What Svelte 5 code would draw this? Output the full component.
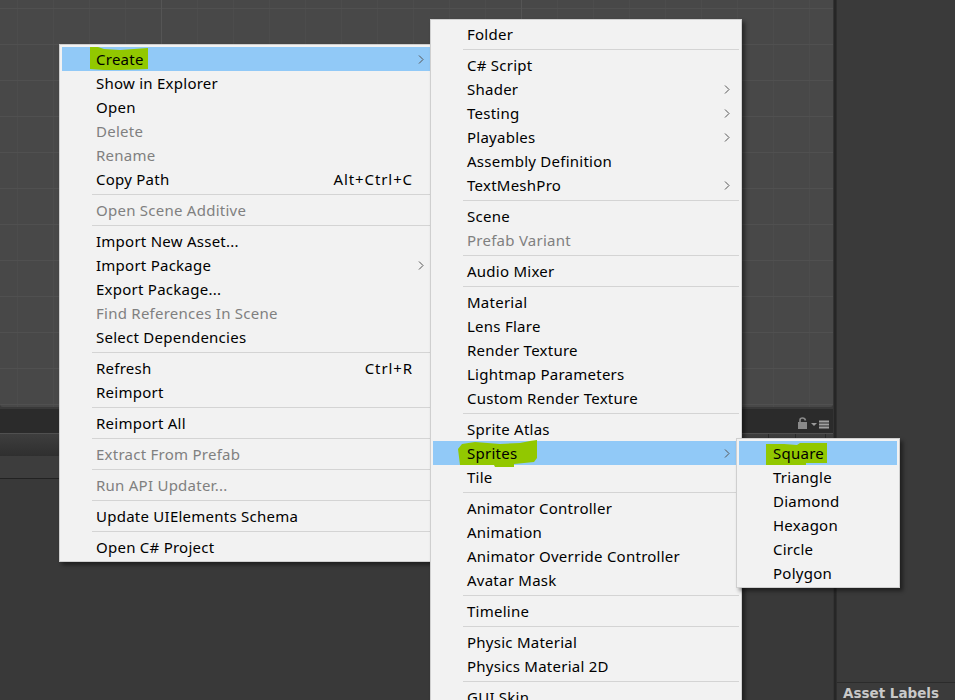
<script lang="ts">
  type Item = { label?: string; sep?: boolean; off?: boolean; sub?: boolean; key?: string; on?: boolean; blob?: string };

  // Hand-drawn marker strokes, relative to the blob svg origin
  const createBlob = "M0 1L8 1L14 3L30 4L44 3L58 2L58 23L30 24L14 24L0 23Z";
  const spritesBlob = "M-3 9L1 4L14 2L39 4L59 3L69 1L76 0L76 18L73 22L53 24L53 27L34 27L33 25L-1 25Z";
  const squareBlob = "M-1 4L17 4L30 5L33 3L60 3L60 23L39 23L39 25L-1 25Z";

  const mainMenu: Item[] = [
    { label: "Create", sub: true, on: true, blob: createBlob },
    { label: "Show in Explorer" },
    { label: "Open" },
    { label: "Delete", off: true },
    { label: "Rename", off: true },
    { label: "Copy Path", key: "Alt+Ctrl+C" },
    { sep: true },
    { label: "Open Scene Additive", off: true },
    { sep: true },
    { label: "Import New Asset..." },
    { label: "Import Package", sub: true },
    { label: "Export Package..." },
    { label: "Find References In Scene", off: true },
    { label: "Select Dependencies" },
    { sep: true },
    { label: "Refresh", key: "Ctrl+R" },
    { label: "Reimport" },
    { sep: true },
    { label: "Reimport All" },
    { sep: true },
    { label: "Extract From Prefab", off: true },
    { sep: true },
    { label: "Run API Updater...", off: true },
    { sep: true },
    { label: "Update UIElements Schema" },
    { sep: true },
    { label: "Open C# Project" },
  ];

  const createMenu: Item[] = [
    { label: "Folder" },
    { sep: true },
    { label: "C# Script" },
    { label: "Shader", sub: true },
    { label: "Testing", sub: true },
    { label: "Playables", sub: true },
    { label: "Assembly Definition" },
    { label: "TextMeshPro", sub: true },
    { sep: true },
    { label: "Scene" },
    { label: "Prefab Variant", off: true },
    { sep: true },
    { label: "Audio Mixer" },
    { sep: true },
    { label: "Material" },
    { label: "Lens Flare" },
    { label: "Render Texture" },
    { label: "Lightmap Parameters" },
    { label: "Custom Render Texture" },
    { sep: true },
    { label: "Sprite Atlas" },
    { label: "Sprites", sub: true, on: true, blob: spritesBlob },
    { label: "Tile" },
    { sep: true },
    { label: "Animator Controller" },
    { label: "Animation" },
    { label: "Animator Override Controller" },
    { label: "Avatar Mask" },
    { sep: true },
    { label: "Timeline" },
    { sep: true },
    { label: "Physic Material" },
    { label: "Physics Material 2D" },
    { sep: true },
    { label: "GUI Skin" },
  ];

  const spritesMenu: Item[] = [
    { label: "Square", on: true, blob: squareBlob },
    { label: "Triangle" },
    { label: "Diamond" },
    { label: "Hexagon" },
    { label: "Circle" },
    { label: "Polygon" },
  ];
</script>

{#snippet menu(items: Item[], cls: string)}
  <div class="menu {cls}">
    {#each items as item}
      {#if item.sep}
        <div class="sep"></div>
      {:else}
        <div class="item" class:on={item.on} class:off={item.off}>
          {#if item.blob}
            <svg class="blob" width="80" height="28" viewBox="0 0 80 28"><path d={item.blob} fill="#92c800"/></svg>
          {/if}
          <span class="label">{item.label}</span>
          {#if item.key}<span class="key">{item.key}</span>{/if}
          {#if item.sub}
            <svg class="chev" width="6" height="9" viewBox="0 0 6 9"><path d="M1 .5L5 4.5L1 8.5" fill="none" stroke="#555" stroke-width="1"/></svg>
          {/if}
        </div>
      {/if}
    {/each}
  </div>
{/snippet}

<div class="editor">
  <div class="main-col">
    <div class="scene"></div>
    <div class="toolbar">
      <svg class="tools" width="34" height="14" viewBox="0 0 34 14">
        <rect x="1" y="5" width="9" height="7" fill="#8a8a8a"/>
        <path d="M3 5V3Q3 1 5.5 1Q8 1 8.5 3.5" fill="none" stroke="#8a8a8a" stroke-width="1.6"/>
        <path d="M14 6H20L17 9Z" fill="#9a9a9a"/>
        <path d="M22 4.5H32M22 7.5H32M22 10.5H32" stroke="#a0a0a0" stroke-width="2"/>
      </svg>
    </div>
    <div class="tabs">
      <div class="tab" style="width: 28px"></div>
      <div class="tab" style="width: 26px"></div>
      <div class="tab" style="width: 29px"></div>
      <div class="tab" style="width: 7px"></div>
    </div>
    <div class="filter"></div>
    <div class="list"></div>
  </div>
  <div class="splitter"></div>
  <div class="side">
    <div class="side-body"></div>
    <div class="labels">Asset Labels</div>
  </div>

  {@render menu(mainMenu, "m-main")}
  {@render menu(createMenu, "m-create")}
  {@render menu(spritesMenu, "m-sprites")}
</div>

<style>
  :global(body) {
    margin: 0;
    background: #393939;
  }

  .editor {
    position: relative;
    width: 955px;
    height: 700px;
    overflow: hidden;
    display: flex;
    font-family: "Noto Sans", "Open Sans", sans-serif;
  }

  /* ── Editor panels behind the menus ── */

  .main-col {
    width: 833px;
    display: flex;
    flex-direction: column;
  }

  .scene {
    height: 407px;
    background-color: #484848;
    background-image:
      linear-gradient(90deg, #555 1px, transparent 1px),
      linear-gradient(#505050 1px, transparent 1px),
      linear-gradient(90deg, #4c4c4c 1px, transparent 1px);
    background-size: 360px 360px, 36px 36px, 36px 36px;
    background-position: 161px 0, 0 8px, 17px 0;
    border-radius: 0 0 3px 3px;
  }

  .toolbar {
    height: 24px;
    margin-top: 2px;
    background: #2b2b2b;
    border-bottom: 1px solid #505050;
    display: flex;
    align-items: center;
    justify-content: flex-end;
    padding-right: 2px;
  }

  .tools {
    margin-top: 6px;
  }

  .tabs {
    height: 22px;
    background: linear-gradient(#3e3e3e, #2f2f2f);
    display: flex;
    justify-content: flex-end;
  }

  .tab {
    border-left: 1px solid #2a2a2a;
  }

  .filter {
    height: 22px;
    background: #3d3d3d;
    border-bottom: 1px solid #222;
  }

  .list {
    flex: 1;
    background: #393939;
  }

  .splitter {
    width: 4px;
    background: #262626;
    border-left: 1px solid #333;
    border-right: 1px solid #2e2e2e;
    box-sizing: border-box;
  }

  .side {
    flex: 1;
    display: flex;
    flex-direction: column;
    background: #3a3a3a;
  }

  .side-body {
    flex: 1;
  }

  .labels {
    height: 17px;
    padding-left: 6px;
    background: #3b3b3b;
    border-top: 1px solid #2b2b2b;
    color: #c9c9c9;
    font: bold 13.5px/20px "DejaVu Sans", sans-serif;
    white-space: nowrap;
  }

  /* ── Context menus ── */

  .menu {
    position: absolute;
    box-sizing: border-box;
    padding: 2px;
    background: #f2f2f2;
    border: 1px solid #cfcfcf;
    box-shadow: 3px 3px 4px rgba(0, 0, 0, 0.45);
    color: #000;
    font-size: 15px;
    letter-spacing: 0.25px;
  }

  .m-main {
    left: 59px;
    top: 44px;
    width: 377px;
  }

  .m-create {
    left: 430px;
    top: 19px;
    width: 312px;
  }

  .m-sprites {
    left: 736px;
    top: 438px;
    width: 164px;
  }

  .item {
    position: relative;
    height: 24px;
    line-height: 24px;
    padding-left: 34px;
    white-space: nowrap;
  }

  .item.on {
    background: #91c9f7;
  }

  .item.off {
    color: #808080;
  }

  .label {
    position: relative;
  }

  .blob {
    position: absolute;
    left: 28px;
    top: -1px;
    overflow: visible;
  }

  .key {
    position: absolute;
    right: 20px;
    top: 0;
    letter-spacing: 0.9px;
  }

  .chev {
    position: absolute;
    right: 9px;
    top: 8px;
  }

  .sep {
    height: 1px;
    margin: 3px 0 3px 30px;
    background: #d4d4d4;
  }
</style>
